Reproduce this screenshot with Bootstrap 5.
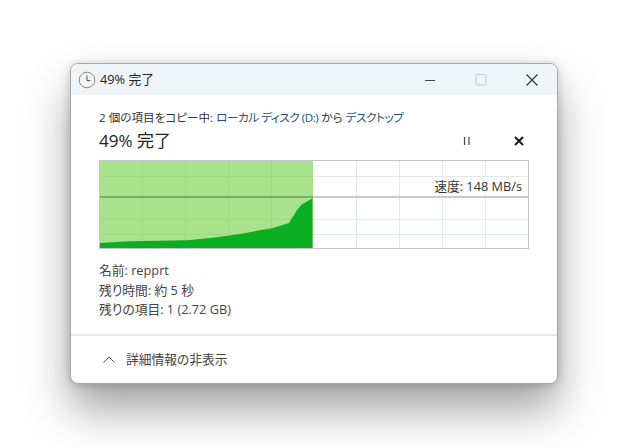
<!DOCTYPE html>
<html lang="ja">
<head>
  <meta charset="UTF-8">
  <title>49% 完了</title>
  <link href="https://cdn.jsdelivr.net/npm/bootstrap@5.3.0/dist/css/bootstrap.min.css" rel="stylesheet">
  <style>
    html, body { height: 448px; }
    body {
      background: #fff;
      font-family: "Open Sans", "Noto Sans CJK JP", sans-serif;
      font-size: 12.75px;
      font-feature-settings: "palt";
      color: #333;
      padding: 63px 0 0 70px;
    }
    .copy-win {
      width: 488px;
      height: 321px;
      background: #fff;
      border: 1px solid #a8a8a8;
      border-radius: 8px;
      box-shadow: 0 26px 44px rgba(0, 0, 0, .36), 0 1px 10px rgba(0, 0, 0, .2);
      overflow: hidden;
    }
    .win-title {
      height: 31px;
      background: #eff4f9;
      padding-left: 7px;
      color: #222;
    }
    .win-btn { width: 51px; }
    .win-body { padding: 13px 29px 0 28px; }
    .copy-line { line-height: 20px; height: 20px; font-size: 11.6px; white-space: nowrap; }
    .copy-line span { color: #1f4e79; letter-spacing: -.45px; }
    .pct-line { height: 26px; font-size: 17px; line-height: 24px; color: #222; margin-right: -17px; }
    .pct-btn { width: 52px; }
    .chart-box { position: relative; height: 90px; margin-top: 6px; }
    .chart-box svg { display: block; }
    .speed-label {
      position: absolute;
      right: 6px;
      top: 17px;
      line-height: 18px;
      background: #fff;
      padding-left: 2px;
      color: #333;
    }
    .detail-lines { margin-top: 11px; line-height: 19.5px; color: #444; }
    .more-bar {
      border-top: 2px solid #e6e6e6;
      height: 49px;
      padding-left: 31px;
      gap: 10px;
      color: #444;
    }
  </style>
</head>
<body>
  <div class="copy-win d-flex flex-column">
    <div class="win-title d-flex align-items-center flex-shrink-0">
      <svg width="18" height="18" viewBox="0 0 18 18" class="me-1">
        <circle cx="9" cy="9" r="7.8" fill="#f4f4f4" stroke="#8a8a8a" stroke-width="1"/>
        <path d="M9 4.5V9.6H12.6" fill="none" stroke="#555" stroke-width="1"/>
      </svg>
      <div class="flex-grow-1">49% 完了</div>
      <div class="win-btn d-flex justify-content-center">
        <svg width="14" height="14" viewBox="0 0 14 14"><path d="M2 7.5H12" stroke="#444" stroke-width="1.2"/></svg>
      </div>
      <div class="win-btn d-flex justify-content-center">
        <svg width="14" height="14" viewBox="0 0 14 14"><rect x="2" y="1.5" width="10" height="10.5" rx="1.5" fill="none" stroke="#c8c8c8"/></svg>
      </div>
      <div class="win-btn d-flex justify-content-center">
        <svg width="14" height="14" viewBox="0 0 14 14"><path d="M1.5 1.5L12.5 12.5M12.5 1.5L1.5 12.5" stroke="#333" stroke-width="1.2"/></svg>
      </div>
    </div>
    <div class="win-body flex-grow-1">
      <div class="copy-line">2 個の項目をコピー中: <span>ローカル ディスク (D:)</span> から <span>デスクトップ</span></div>
      <div class="pct-line d-flex align-items-center">
        <div class="flex-grow-1">49% 完了</div>
        <div class="pct-btn d-flex justify-content-center">
          <svg width="12" height="12" viewBox="0 0 12 12"><path d="M3.5 2V10M8 2V10" stroke="#444" stroke-width="1.2"/></svg>
        </div>
        <div class="pct-btn d-flex justify-content-center">
          <svg width="12" height="12" viewBox="0 0 12 12"><path d="M2 2L10 10M10 2L2 10" stroke="#111" stroke-width="1.8"/></svg>
        </div>
      </div>
      <div class="chart-box">
        <svg width="430" height="90" viewBox="99 160 430 90">
          <rect x="99.5" y="160.5" width="429" height="88" fill="#fff"/>
          <rect x="100" y="161" width="213" height="87" fill="#a8e28c"/>
          <g stroke="#e2e8e6" fill="none">
            <path d="M313 176.5H528M313 219.5H528M313 234.5H528"/>
            <path d="M356.5 161V248M399.5 161V248M442.5 161V248M485.5 161V248"/>
          </g>
          <g stroke="#9dd982" fill="none">
            <path d="M100 176.5H313M100 219.5H313M100 234.5H313"/>
            <path d="M142.5 161V248M185.5 161V248M228.5 161V248M271.5 161V248"/>
          </g>
          <path d="M100 197H313" stroke="#7fae6b" stroke-width="2"/>
          <path d="M313 197H528" stroke="#c9c9c9" stroke-width="2"/>
          <polygon fill="#0bae20" points="100,243 130,241.3 187,240.3 213,237.7 240,234 257,230.7 273,228 289,223 297,210 302,204.3 312.5,198.3 312.5,248 100,248"/>
          <rect x="99.5" y="160.5" width="429" height="88" fill="none" stroke="#c4c4c4"/>
        </svg>
        <div class="speed-label">速度: 148 MB/s</div>
      </div>
      <div class="detail-lines">
        <div>名前: repprt</div>
        <div>残り時間: 約 5 秒</div>
        <div>残りの項目: 1 (2.72 GB)</div>
      </div>
    </div>
    <div class="more-bar d-flex align-items-center flex-shrink-0">
      <svg width="14" height="14" viewBox="0 0 14 14"><path d="M1.5 9.5L7 4L12.5 9.5" fill="none" stroke="#555" stroke-width="1"/></svg>
      <div>詳細情報の非表示</div>
    </div>
  </div>
</body>
</html>
